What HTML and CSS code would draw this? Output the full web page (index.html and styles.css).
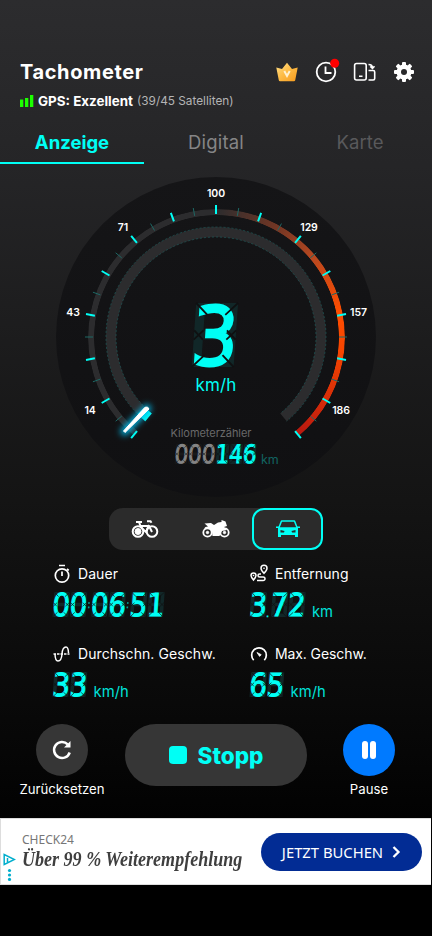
FILE: index.html
```html
<!DOCTYPE html>
<html lang="de">
<head>
<meta charset="utf-8">
<meta name="viewport" content="width=device-width, initial-scale=1">
<title>Tachometer</title>
<link rel="stylesheet" href="styles.css">
</head>
<body>
<main class="app">
  <header class="header">
    <div class="title-row">
      <h1 class="title">Tachometer</h1>
      <nav class="actions">
        <svg class="crown" width="22" height="20" viewBox="0 0 22 20">
          <defs><linearGradient id="gold" x1="0" y1="0" x2="1" y2="1"><stop offset="0" stop-color="#ffe08a"/><stop offset=".5" stop-color="#fdbb45"/><stop offset="1" stop-color="#f79a1c"/></linearGradient></defs>
          <path d="M.3 5.500 6 7 11 .8 16 7l5.700-1.500-2.500 12.700q-.2 1-1.200 1H4q-1 0-1.200-1z" fill="url(#gold)"/>
          <path d="m8.300 9 2.700 5 2.700-5" fill="none" stroke="#fff1cf" stroke-width="2"/>
        </svg>
        <svg class="history" width="26" height="26" viewBox="0 0 26 26">
          <circle cx="12" cy="14" r="9.300" fill="none" stroke="#fff" stroke-width="1.800"/>
          <path d="M11.500 8.500V15h6" fill="none" stroke="#fff" stroke-width="1.800"/>
          <circle cx="20.700" cy="5.200" r="4.500" fill="#f00"/>
        </svg>
        <svg class="rotate" width="24" height="22" viewBox="0 0 24 22" fill="none" stroke="#fff" stroke-width="1.600">
          <rect x="1.600" y="2.500" width="11.600" height="16.500" rx="2"/>
          <path d="M6 15.300h3.500M15.500 9.500h4.700q1.500 0 1.500 1.500v6.500q0 1.500-1.500 1.500h-4.700M15.500 3.500q4 0 4 3.500M17.300 5.300l2.200 2 2-2"/>
        </svg>
        <svg class="gear" width="20" height="20" viewBox="-10 -10 20 20">
          <g fill="#fff"><rect x="-2" y="-10" width="4" height="20" rx="1"/><rect x="-2" y="-10" width="4" height="20" rx="1" transform="rotate(45)"/><rect x="-2" y="-10" width="4" height="20" rx="1" transform="rotate(90)"/><rect x="-2" y="-10" width="4" height="20" rx="1" transform="rotate(135)"/><circle r="7.500"/></g>
          <circle r="3" fill="#29292b"/>
        </svg>
      </nav>
    </div>
    <div class="gps">
      <svg width="14" height="12" viewBox="0 0 14 12" fill="#1cff00"><path d="M0 4.500h3.300V12H0zM5 3h3.300v9H5zM10 0h3.300v12H10z"/></svg>
      <b class="gps-state">GPS: Exzellent</b><span class="gps-sats">(39/45 Satelliten)</span>
    </div>
  </header>

  <nav class="tabs">
    <a class="tab active"><span>Anzeige</span></a>
    <a class="tab digital"><span>Digital</span></a>
    <a class="tab karte"><span>Karte</span></a>
  </nav>

  <section class="gauge">
    <div class="scale-ring"></div>
    <svg class="dial" viewBox="0 0 320 320" width="320" height="320">
      <defs><filter id="glow" x="-100%" y="-100%" width="300%" height="300%"><feGaussianBlur stdDeviation="3"/></filter></defs>
      <path id="track" fill="none" stroke="#2c2c2e" stroke-width="10"/>
      <path id="trackOuter" class="dots"/>
      <path id="trackInner" class="dots"/>
      <path id="progress" fill="none" stroke="#00fff5" stroke-width="10"/>
      <g id="ticks"></g>
      <path d="M68.500 254.500 91 231.500" stroke="#00b8e8" stroke-width="8" stroke-linecap="round" filter="url(#glow)"/>
      <path d="M67.500 254 89 230.300Q92 229 93 232L69 255.500z" fill="#fff" stroke="#fff" stroke-linejoin="round"/>
      <g class="marks">
        <text x="34" y="237">14</text>
        <text x="17" y="139">43</text>
        <text x="67" y="53.500">71</text>
        <text x="160" y="19.500">100</text>
        <text x="253" y="53.500">129</text>
        <text x="302.500" y="139">157</text>
        <text x="285" y="237">186</text>
      </g>
    </svg>
    <div class="reading">
      <div class="display" data-value="3" data-pitch="46" data-height="64"></div>
      <div class="speed-unit">km/h</div>
      <div class="odo-label">Kilometerzähler</div>
      <div class="odo">
        <div class="display muted" data-value="000" data-pitch="13.600" data-height="20"></div>
        <div class="display" data-value="146" data-pitch="13.600" data-height="20"></div>
        <span>km</span>
      </div>
    </div>
  </section>

  <section class="modes">
    <div class="mode"><svg width="28" height="20" viewBox="0 0 28 20" fill="none" stroke="#fff"><circle cx="7" cy="12.500" r="5.300" stroke-width="2"/><circle cx="7" cy="12.500" r="3" fill="#fff"/><circle cx="21" cy="12.500" r="5.300" stroke-width="2"/><path d="M5 3h6M8 3l2 5.500L15 13l3-7M9 7h9l3 6M16 2.200h3.500l1 1.500" stroke-width="2"/></svg></div>
    <div class="mode"><svg width="28" height="20" viewBox="0 0 28 20" fill="none" stroke="#fff"><circle cx="5.500" cy="13.500" r="4.200" stroke-width="1.800"/><circle cx="22.500" cy="13.500" r="4.200" stroke-width="1.800"/><path d="M2.500 4.500 9 4l3 2 4-2.500 3.500-.5v-2l4 1.500 1.500 4.500-3 1 3 3-5 1-2.500 5h-7L10 13 7 9.500H2q1-2 4-2z" fill="#fff" stroke="none"/><circle cx="5.500" cy="13.500" r="1.200" fill="#fff"/><circle cx="22.500" cy="13.500" r="1.200" fill="#fff"/></svg></div>
    <div class="mode selected"><svg width="26" height="20" viewBox="0 0 26 20"><path d="M6.500 2h13l2.700 7H3.800z" fill="none" stroke="#00fff5" stroke-width="1.500" stroke-linejoin="round"/><path d="M1 7.500h3v1.500h18V7.500h3V9h-2v9h-3v-2H6v2H3V9H1z" fill="#00fff5"/><path d="m5.500 11 4 1-.5 1.500H5.500zm15 0-4 1 .5 1.500h3.500z" fill="#292929"/></svg></div>
  </section>

  <section class="stats">
    <div class="stat">
      <div class="stat-label"><svg width="18" height="20" viewBox="0 0 18 20" fill="none" stroke="#fff" stroke-width="1.700"><circle cx="9" cy="11.500" r="6.700"/><path d="M6 1.500h6M9 7.500v4.500M14 5l1.700 1.500"/></svg><span>Dauer</span></div>
      <div class="value"><div class="display" data-value="00:06:51" data-pitch="17.300" data-height="25"></div></div>
    </div>
    <div class="stat">
      <div class="stat-label"><svg width="18" height="20" viewBox="0 0 18 20" fill="none" stroke="#fff" stroke-width="1.500"><path d="M3.500 16Q1 13 1 11.500a2.500 2.500 0 0 1 5 0q0 1.500-2.500 4.500zM14 9.300q-3-3.300-3-5.100a3 3 0 0 1 6 0q0 1.800-3 5.100z"/><path d="M11 10H9.500a1.500 1.500 0 0 0 0 3h3.700a1.800 1.800 0 0 1 0 3.600H7"/><path d="M3.400 11.400h.2M13.900 4.200h.2" stroke-linecap="round"/></svg><span>Entfernung</span></div>
      <div class="value"><div class="display" data-value="3.72" data-pitch="17.300" data-height="25"></div><span class="unit">km</span></div>
    </div>
    <div class="stat">
      <div class="stat-label"><svg width="18" height="20" viewBox="0 0 18 20" fill="none" stroke="#fff" stroke-width="1.500"><path d="M2 10q.2 7 3 7 3.500 0 4-7t4-7q2.300 0 2.500 6"/><path d="M.5 10h16" stroke-dasharray="2.500 1"/></svg><span>Durchschn. Geschw.</span></div>
      <div class="value"><div class="display" data-value="33" data-pitch="17.300" data-height="25"></div><span class="unit">km/h</span></div>
    </div>
    <div class="stat">
      <div class="stat-label"><svg width="18" height="20" viewBox="0 0 18 20" fill="none" stroke="#fff" stroke-width="1.700"><path d="M3.700 16.200a7.300 7.300 0 1 1 10.600 0"/><path d="m7 8.500 4.200 2.200-1.600 1.700z" fill="#fff" stroke-width=".8"/></svg><span class="maximum">Max. Geschw.</span></div>
      <div class="value"><div class="display" data-value="65" data-pitch="17.300" data-height="25"></div><span class="unit">km/h</span></div>
    </div>
  </section>

  <section class="controls">
    <div class="control"><div class="round"><svg width="22" height="22" viewBox="0 0 22 22" fill="none" stroke="#fff" stroke-width="2.500"><path d="M18.700 13.500A8 8 0 1 1 16.700 5.300"/><path d="M19.500 2v6.500H13z" fill="#fff" stroke="none"/></svg></div><span>Zurücksetzen</span></div>
    <div class="stop"><i></i><span>Stopp</span></div>
    <div class="control"><div class="round blue"><i></i><i></i></div><span>Pause</span></div>
  </section>

  <aside class="ad">
    <div class="ad-marks"><svg width="13" height="28" viewBox="0 0 13 28"><path d="M1.200 1.500v10L11.500 6.500zM4.500 5v4" fill="none" stroke="#00aecd" stroke-width="1.500"/><g fill="#00aecd"><circle cx="6.500" cy="17.500" r="1.600"/><circle cx="6.500" cy="22" r="1.600"/><circle cx="6.500" cy="26.400" r="1.600"/></g></svg></div>
    <div class="ad-copy"><span class="brand">CHECK24</span><span class="slogan">Über 99 % Weiterempfehlung</span></div>
    <div class="cta"><span>JETZT BUCHEN</span><svg width="9" height="12" viewBox="0 0 9 12"><path d="m1.500 1 5 5-5 5" fill="none" stroke="#fff" stroke-width="2.300"/></svg></div>
  </aside>
</main>
<script src="script.js"></script>
</body>
</html>
```
FILE: styles.css
```css
* { box-sizing: border-box; }
body { margin: 0; background: #000; color: #fff; font-family: Inter, "Open Sans", sans-serif; }
.app { width: 432px; height: 936px; overflow: hidden; display: flex; flex-direction: column; background: linear-gradient(#2c2c2e 0, #252527 165px, #141414 500px, #080808 720px, #020202 818px, #000 885px); white-space: nowrap; }
svg { display: block; flex: none; }

.header { height: 123px; padding: 59px 18px 0 20px; flex: none; }
.title-row { display: flex; justify-content: space-between; align-items: center; height: 26px; }
.title { margin: 0; font-size: 20px; font-weight: 700; letter-spacing: .62px; }
.actions { display: flex; align-items: center; }
.crown { margin-right: 16px; }
.history { margin: -2px 13px 0 0; }
.rotate { margin-right: 17px; }
.gps { display: flex; align-items: center; height: 16px; margin-top: 8px; }
.gps-state { margin-left: 4px; width: 99px; font-size: 13.4px; }
.gps-sats { font-size: 11.8px; color: #b4b4b5; }

.tabs { display: flex; height: 41px; flex: none; font-size: 18.5px; }
.tab { width: 144px; display: flex; justify-content: center; align-items: center; color: #858586; padding-bottom: 3px; }
.tab.active { color: #00fff5; font-weight: 700; border-bottom: 2px solid #00fff5; padding: 0 0 1px; }
.tab.digital { letter-spacing: .2px; }
.tab.karte { color: #59595b; letter-spacing: .1px; }

.gauge { position: relative; width: 320px; height: 320px; margin: 13px 56px 0; border-radius: 50%; background: linear-gradient(#151517, #101012); flex: none; }
.scale-ring { position: absolute; inset: 31.5px; border-radius: 50%; background: conic-gradient(from 220deg, #2c2c2e 0 140deg, #763724 170deg, #b74820 190deg, #ff4d00 218deg, #f84600 235deg, #b81810 280deg, transparent 280deg); mask: radial-gradient(circle, transparent 122px, #000 122.7px); }
.dial { position: absolute; inset: 0; }
.dots { fill: none; stroke: #1d5353; stroke-width: .8; stroke-dasharray: 2 2; }
.marks { fill: #fff; font-size: 10.5px; font-weight: 600; text-anchor: middle; letter-spacing: -.1px; }
.reading { position: absolute; inset: 126px 0 0; display: flex; flex-direction: column; align-items: center; }
.display { flex: none; }
.display text { font-family: "DejaVu Sans", sans-serif; fill: #00fff5; stroke: #00fff5; }
.display .ghost { fill: none; stroke: #112728; }
.display .gap { fill: none; stroke: #0f1011; }
.display.muted text { fill: #858585; stroke: #858585; }
.display.muted .ghost { stroke: #18191a; }
.speed-unit { margin-top: 7px; height: 23px; line-height: 23px; font-size: 17px; color: #00fff5; letter-spacing: .2px; }
.odo-label { margin: 29px 10px 0 0; height: 14px; line-height: 14px; font-size: 11px; color: #69696a; letter-spacing: -.05px; }
.odo { display: flex; align-items: flex-end; margin: 4px 0 0 22px; }
.odo span { margin-left: 4px; font-size: 12.5px; line-height: 12px; color: #126461; position: relative; top: 2px; }

.modes { display: flex; width: 214px; height: 42px; margin: 11px 0 0 109px; border-radius: 14px; background: #2b2b2b; flex: none; }
.mode { width: 71.5px; display: flex; flex: none; justify-content: center; align-items: center; }
.mode.selected { width: 71px; border: 2px solid #00fff5; border-radius: 12px; }

.stats { display: grid; grid-template-columns: 197px 1fr; grid-auto-rows: 80px; padding: 14px 0 0 53px; flex: none; }
.stat-label { display: flex; align-items: center; height: 20px; gap: 7px; font-size: 14px; letter-spacing: .08px; }
.stat-label span { margin-top: -2px; }
.maximum { letter-spacing: -.1px; }
.value { display: flex; align-items: flex-end; height: 25px; margin-top: 8px; }
.unit { margin: 0 0 -3px 6px; font-size: 14.8px; line-height: 15px; color: #00e1d9; }

.controls { display: flex; align-items: flex-start; padding-left: 17px; height: 94px; flex: none; }
.control { width: 90px; display: flex; flex-direction: column; align-items: center; font-size: 13.2px; }
.round { width: 52px; height: 52px; border-radius: 50%; background: #363636; display: flex; align-items: center; justify-content: center; gap: 2px; margin-bottom: 5px; }
.round.blue { background: #007aff; }
.blue i { width: 6px; height: 18px; border-radius: 3px; background: #fff; }
.stop { width: 182px; height: 62px; margin: 0 17px 0 18px; border-radius: 31px; background: #363636; display: flex; align-items: center; justify-content: center; gap: 11px; color: #00fff5; font-size: 22.5px; font-weight: 800; }
.stop i { width: 18px; height: 18px; border-radius: 4px; background: #00fff5; }

.ad { display: flex; align-items: center; width: 431px; height: 67px; background: #fff; border: 1px solid #ddd; border-right: 0; flex: none; }
.ad-marks { width: 21px; padding: 30px 0 0 2px; }
.ad-copy { width: 239px; display: flex; flex-direction: column; align-items: flex-start; color: #3f3f3f; padding-top: 2px; }
.brand { font: 12px/14px "Noto Sans", sans-serif; color: #777; }
.slogan { font: italic bold 20.5px/25px "Liberation Serif", serif; transform: scaleX(.88); transform-origin: left; }
.cta { width: 161px; height: 38px; border-radius: 19px; background: #022c94; display: flex; align-items: center; justify-content: center; gap: 9px; font: 14.8px "Noto Sans", sans-serif; color: #fff; }
```
FILE: script.js
```js
const CX = 160, CY = 160;
const point = (deg, r) => {
  const a = deg * Math.PI / 180;
  return [CX + r * Math.sin(a), CY - r * Math.cos(a)];
};
const arc = (from, to, r) =>
  `M${point(from, r)} A${r} ${r} 0 ${to - from > 180 ? 1 : 0} 1 ${point(to, r)}`;

document.getElementById('track').setAttribute('d', arc(-140, 140, 105));
document.getElementById('trackOuter').setAttribute('d', arc(-140, 140, 110));
document.getElementById('trackInner').setAttribute('d', arc(-140, 140, 100));
document.getElementById('progress').setAttribute('d', arc(-140, -134.5, 105));

let ticks = '';
for (let i = 0; i <= 28; i++) {
  const major = i % 2 === 0;
  const deg = -140 + i * 10;
  ticks += `<path d="M${point(deg, 123)} L${point(deg, major ? 132 : 131)}" stroke="${major ? '#00fff5' : '#1d6865'}" stroke-width="${major ? 2 : 1}"/>`;
}
document.getElementById('ticks').innerHTML = ticks;

// Segmented readouts: unlit cells behind, digits on top, joints cut over them.
document.querySelectorAll('.display').forEach(el => {
  const p = +el.dataset.pitch, h = +el.dataset.height;
  const s = h / 25, w = p - 1.6 * s, sw = 3.6 * s, k = sw / 2;
  const fs = h / 0.79, sx = w / (fs * 0.57);
  let x = 0, out = '';
  for (const c of el.dataset.value) {
    if (c === ':' || c === '.') {
      out += `<text transform="translate(${x - 1} ${h - (c === ':' ? 9 : 0)})" font-size="11" stroke-width=".3" opacity="${c === ':' ? 0.6 : 1}">${c}</text>`;
      x += 4.1;
      continue;
    }
    const r = x + w, m = h / 2;
    out += `<path class="ghost" stroke-width="${sw}" d="M${x + k} ${k}H${r - k}V${h - k}H${x + k}zM${x + k} ${m}H${r - k}"/>`;
    out += `<text transform="translate(${x - 0.033 * fs * sx} ${h - 0.8 * s}) scale(${sx} 1)" font-size="${fs}" stroke-width="${1.1 * s}">${c}</text>`;
    out += `<path class="gap" stroke-width="${0.7 * s}" d="M${x} 0l${sw * 1.3} ${sw * 1.3}M${r} 0l${-sw * 1.3} ${sw * 1.3}M${x} ${h}l${sw * 1.3} ${-sw * 1.3}M${r} ${h}l${-sw * 1.3} ${-sw * 1.3}M${x} ${m - k}l${sw} ${sw}M${x} ${m + k}l${sw} ${-sw}M${r} ${m - k}l${-sw} ${sw}M${r} ${m + k}l${-sw} ${-sw}"/>`;
    x += p;
  }
  el.innerHTML = `<svg width="${x}" height="${h}" overflow="visible"><g transform="translate(${h * 0.05} 0) skewX(-4)">${out}</g></svg>`;
});
```
